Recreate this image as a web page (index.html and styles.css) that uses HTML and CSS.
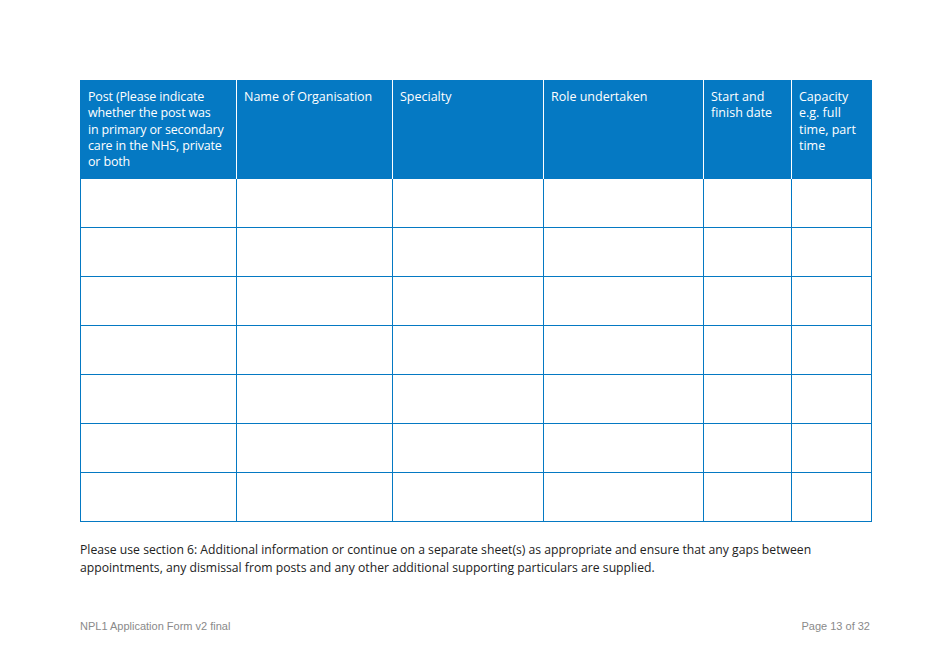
FILE: index.html
```html
<!DOCTYPE html>
<html>
<head>
<meta charset="utf-8">
<link rel="stylesheet" href="styles.css">
</head>
<body>
<div class="page">
  <table class="grid">
    <colgroup>
      <col class="c1"><col class="c2"><col class="c3"><col class="c4"><col class="c5"><col class="c6">
    </colgroup>
    <thead>
      <tr>
        <th class="first">Post (Please indicate<br>whether the post was<br>in primary or secondary<br>care in the NHS, private<br>or both</th>
        <th>Name of Organisation</th>
        <th>Specialty</th>
        <th>Role undertaken</th>
        <th>Start and finish date</th>
        <th>Capacity e.g. full time, part time</th>
      </tr>
    </thead>
    <tbody>
      <tr><td></td><td></td><td></td><td></td><td></td><td></td></tr>
      <tr><td></td><td></td><td></td><td></td><td></td><td></td></tr>
      <tr><td></td><td></td><td></td><td></td><td></td><td></td></tr>
      <tr><td></td><td></td><td></td><td></td><td></td><td></td></tr>
      <tr><td></td><td></td><td></td><td></td><td></td><td></td></tr>
      <tr><td></td><td></td><td></td><td></td><td></td><td></td></tr>
      <tr><td></td><td></td><td></td><td></td><td></td><td></td></tr>
    </tbody>
  </table>
  <p class="note">Please use section 6: Additional information or continue on a separate sheet(s) as appropriate and ensure that any gaps between appointments, any dismissal from posts and any other additional supporting particulars are supplied.</p>
  <div class="footer">
    <span>NPL1 Application Form v2 final</span>
    <span>Page 13 of 32</span>
  </div>
</div>
</body>
</html>
```
FILE: styles.css
```css
html, body {
  margin: 0;
  padding: 0;
  background: #ffffff;
}
.page {
  width: 950px;
  height: 672px;
  padding: 80px 78px 0 80px;
  box-sizing: border-box;
  display: flex;
  flex-direction: column;
}
.grid {
  border-collapse: collapse;
  table-layout: fixed;
  width: 791px;
}
.c1 { width: 156px; }
.c2 { width: 156px; }
.c3 { width: 151px; }
.c4 { width: 160px; }
.c5 { width: 88px; }
.c6 { width: 80px; }
.grid th {
  background: #0579c3;
  color: #ffffff;
  font-family: "Open Sans", "Noto Sans", sans-serif;
  font-weight: normal;
  font-size: 12.5px;
  line-height: 16.3px;
  text-align: left;
  vertical-align: top;
  padding: 9px 11px 0 7px;
  height: 89px;
  border-left: 1px solid #ffffff;
  border-right: 1px solid #ffffff;
  box-sizing: content-box;
}
.grid th.first {
  padding-right: 2px;
  white-space: nowrap;
  letter-spacing: -0.15px;
}
.grid th:first-child { border-left: 1px solid #0579c3; }
.grid th:last-child { border-right: 1px solid #0579c3; }
.grid td {
  height: 48px;
  padding: 0;
  border: 1px solid #0579c3;
}
.note {
  margin: 19px 0 0 0;
  font-family: "Open Sans", "Noto Sans", sans-serif;
  font-size: 12.2px;
  line-height: 18px;
  color: #222222;
  width: 780px;
}
.footer {
  margin-top: 43px;
  display: flex;
  justify-content: space-between;
  font-family: "Liberation Sans", Arial, sans-serif;
  font-size: 11px;
  color: #8a8a8a;
  width: 790px;
}
```
